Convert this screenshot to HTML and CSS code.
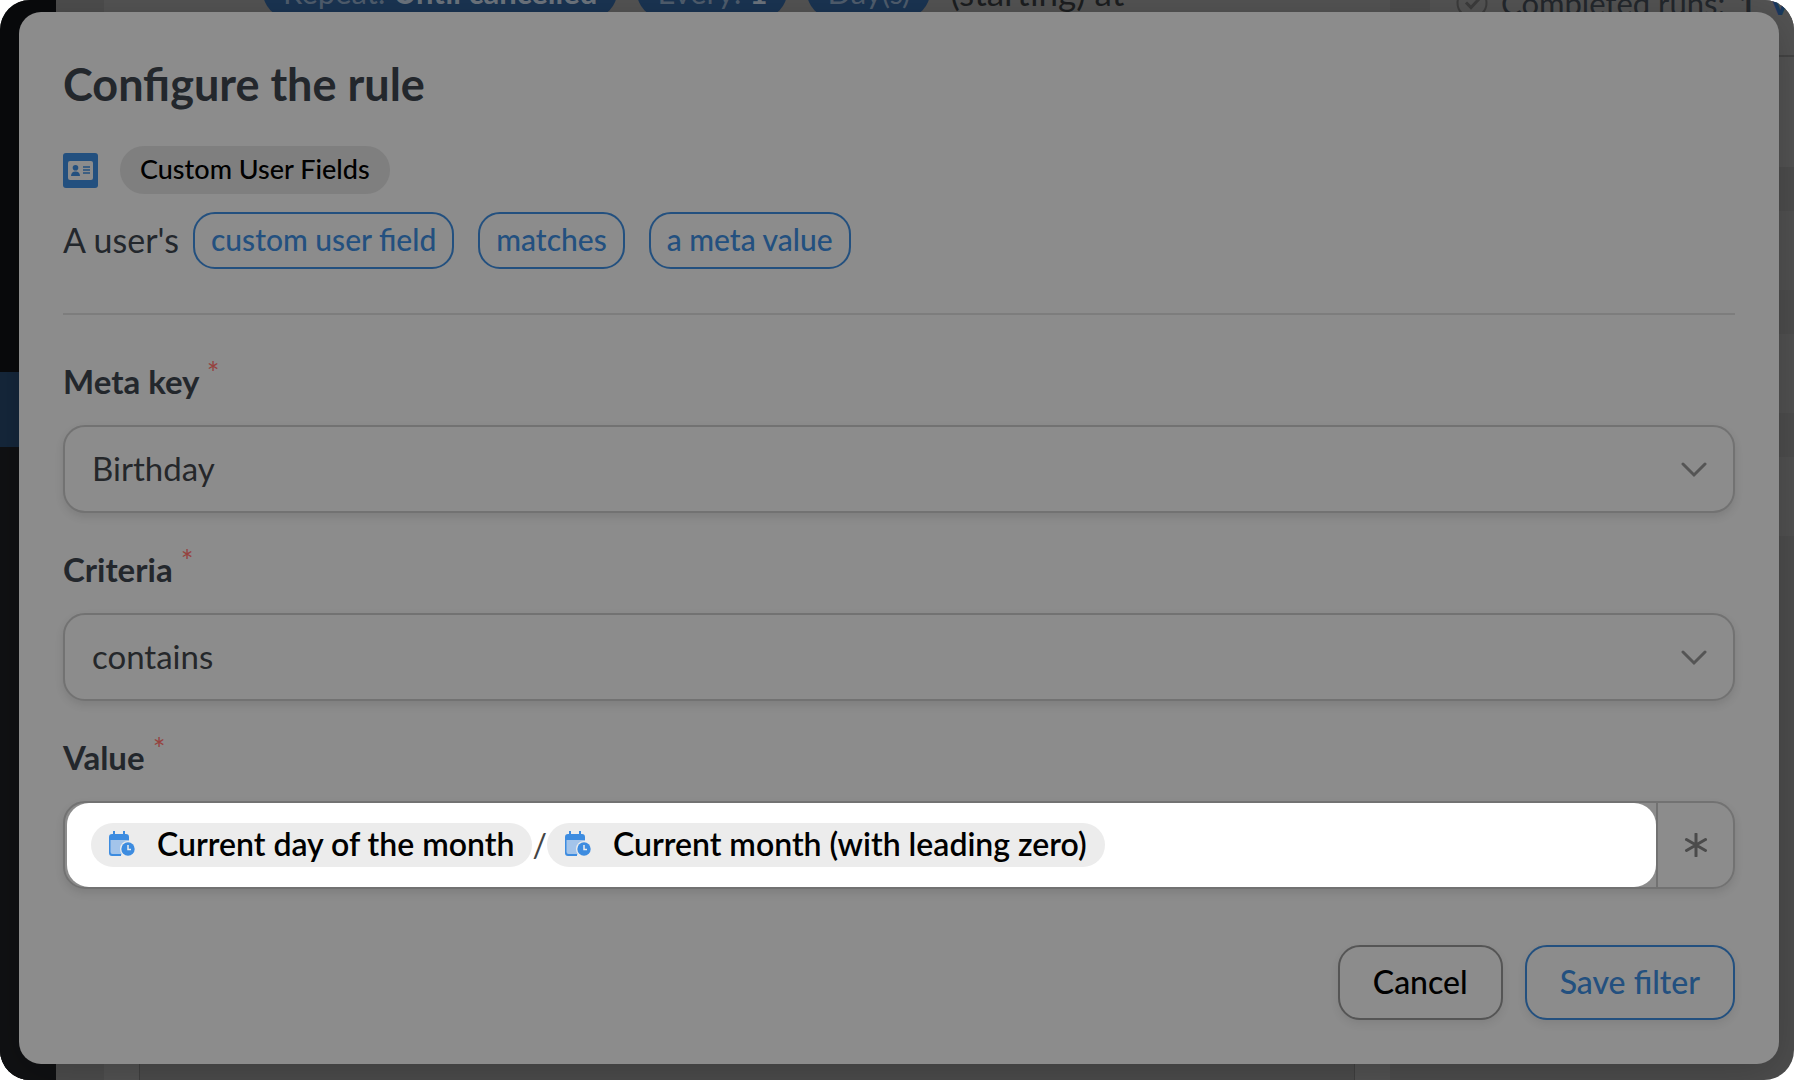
FILE: index.html
```html
<!DOCTYPE html>
<html lang="en">
  <head>
    <meta charset="UTF-8" />
    <meta name="viewport" content="width=device-width, initial-scale=1.0" />
    <title>Configure the rule</title>
    <link rel="stylesheet" href="styles.css">
  </head>
  <body>
    <div class="app">
      <!-- Page behind the dialog -->
      <div class="page" aria-hidden="true">
        <div class="sidebar">
          <div class="sidebar-current"></div>
          <div class="sidebar-submenu"></div>
        </div>
        <div class="editor">
          <div class="editor-canvas">
            <div class="schedule">
              <span class="schedule-pill">Repeat: <b>Until cancelled</b></span>
              <span class="schedule-pill">Every: <b>1</b></span>
              <span class="schedule-pill">Day(s)</span>
              <span class="schedule-text">(starting) at</span>
            </div>
            <div class="editor-block"></div>
          </div>
        </div>
        <div class="panels">
          <div class="panel-first">
            <svg class="check" viewBox="0 0 32 32" fill="none" stroke="currentColor" stroke-width="2">
              <circle cx="16" cy="16" r="14.5" />
              <path d="M10 15.5l5 5 8-8.5" stroke-width="3" />
            </svg>
            <span class="runs">Completed runs:</span>
            <b class="runs-count">1</b>
            <b class="view">View</b>
          </div>
          <div class="panel-body"></div>
          <div class="panel"></div>
          <div class="panel"></div>
          <div class="panel"></div>
        </div>
      </div>

      <div class="overlay">
        <form class="modal" role="dialog" aria-labelledby="modalTitle">
          <h1 id="modalTitle">Configure the rule</h1>

          <div class="integration">
            <svg class="integration-icon" viewBox="0 0 35 35">
              <rect width="35" height="35" rx="3" fill="#23507f" />
              <rect x="5" y="8" width="25" height="19" rx="2" fill="#8c8c8c" />
              <circle cx="12.5" cy="14.8" r="2.8" fill="#23507f" />
              <path d="M8 23c0-3 2-4.400 4.500-4.400s4.500 1.400 4.500 4.400z" fill="#23507f" />
              <path d="M20 14h7M20 17h7M20 20h7" stroke="#23507f" stroke-width="1.400" />
            </svg>
            <span class="integration-name">Custom User Fields</span>
          </div>

          <div class="sentence">
            <span>A user's</span>
            <button type="button" class="token">custom user field</button>
            <button type="button" class="token">matches</button>
            <button type="button" class="token">a meta value</button>
          </div>

          <hr />

          <div class="field">
            <label for="metaKey">Meta key <span class="required">*</span></label>
            <div class="select">
              <select id="metaKey">
                <option>Birthday</option>
              </select>
              <svg class="chevron" viewBox="0 0 26 16"><path d="M2 2l11 11L24 2" /></svg>
            </div>
          </div>

          <div class="field">
            <label for="criteria">Criteria <span class="required">*</span></label>
            <div class="select">
              <select id="criteria">
                <option>contains</option>
              </select>
              <svg class="chevron" viewBox="0 0 26 16"><path d="M2 2l11 11L24 2" /></svg>
            </div>
          </div>

          <div class="field">
            <label id="valueLabel">Value <span class="required">*</span></label>
            <div class="value">
              <div class="value-input" contenteditable="true" role="textbox" aria-labelledby="valueLabel" spellcheck="false"><span class="chip" contenteditable="false"><svg class="chip-icon" viewBox="0 0 26 26">
                    <path d="M1 9h19v8l-8 7H3a2 2 0 0 1-2-2z" fill="#a3c4ea" />
                    <path d="M0 9h1.500v12a2 2 0 0 0 2 2H12v2H3a3 3 0 0 1-3-3z" fill="#3d8ce0" />
                    <path d="M0 9V6a3 3 0 0 1 3-3h1V0h2v3h8V0h2v3h1a3 3 0 0 1 3 3v3z" fill="#3d8ce0" />
                    <circle cx="19" cy="18" r="8" fill="#ececec" />
                    <circle cx="19" cy="18" r="6.700" fill="#3d8ce0" />
                    <path d="M19 14v4.500h3" fill="none" stroke="#ececec" stroke-width="1.500" />
                  </svg>Current day of the month</span><span>/</span><span class="chip" contenteditable="false"><svg class="chip-icon" viewBox="0 0 26 26">
                    <path d="M1 9h19v8l-8 7H3a2 2 0 0 1-2-2z" fill="#a3c4ea" />
                    <path d="M0 9h1.500v12a2 2 0 0 0 2 2H12v2H3a3 3 0 0 1-3-3z" fill="#3d8ce0" />
                    <path d="M0 9V6a3 3 0 0 1 3-3h1V0h2v3h8V0h2v3h1a3 3 0 0 1 3 3v3z" fill="#3d8ce0" />
                    <circle cx="19" cy="18" r="8" fill="#ececec" />
                    <circle cx="19" cy="18" r="6.700" fill="#3d8ce0" />
                    <path d="M19 14v4.500h3" fill="none" stroke="#ececec" stroke-width="1.500" />
                  </svg>Current month (with leading zero)</span></div>
              <button type="button" class="value-tokens" aria-label="Insert token">
                <svg viewBox="0 0 24 24"><path d="M12 1v22M2.500 6.500l19 11M21.500 6.500l-19 11" /></svg>
              </button>
            </div>
          </div>

          <div class="actions">
            <button type="button" class="btn">Cancel</button>
            <button type="submit" class="btn btn-primary">Save filter</button>
          </div>
        </form>
      </div>
    </div>
  </body>
</html>
```

FILE: styles.css
```css
* {
  box-sizing: border-box;
}
body {
  margin: 0;
  background-color: #fff;
  font-family: Lato, sans-serif;
  color: #23272c;
}
button,
select {
  font-family: inherit;
}
.app {
  display: grid;
  min-height: 100vh;
  border-radius: 30px;
  overflow: hidden;
}
.page,
.overlay {
  grid-area: 1 / 1;
  min-width: 0;
}

/* Page behind the dialog */
.page {
  display: flex;
  background-color: #4d4d4d;
}
.sidebar {
  width: 56px;
  padding-top: 372px;
  background-color: #090a0c;
  display: flex;
  flex-direction: column;
}
.sidebar-current {
  height: 75px;
  background-color: #15273b;
}
.sidebar-submenu {
  flex: 1;
  background-color: #101113;
}
.editor {
  flex: 1;
  padding: 0 0 0 48px;
}
.editor-canvas {
  height: 100%;
  padding: 0 35px;
  background-color: #535353;
  display: flex;
  flex-direction: column;
}
.schedule {
  display: flex;
  align-items: center;
  gap: 20px;
  height: 52px;
  margin: -34px 0 0 124px;
  font-size: 31px;
  white-space: nowrap;
}
.schedule-pill {
  padding: 0 20px;
  border-radius: 26px;
  background-color: #1a3452;
  color: #4f5d6d;
  line-height: 52px;
}
.schedule-pill b {
  color: #6c747d;
}
.schedule-text {
  color: #1c1e20;
  font-size: 35px;
}
.editor-block {
  flex: 1;
  margin-top: 32px;
  background-color: #4c4c4c;
  border: 1px solid #404040;
  border-width: 0 1px;
}
.panels {
  width: 404px;
  padding-left: 40px;
  display: flex;
  flex-direction: column;
  gap: 44px;
}
.panel-first {
  display: flex;
  align-items: center;
  gap: 13px;
  height: 87px;
  margin: -30px 0 -44px;
  padding: 0 0 20px 26px;
  background-color: #535353;
  border-bottom: 2px solid #444;
  font-size: 31px;
  white-space: nowrap;
}
.check {
  flex-shrink: 0;
  width: 32px;
  height: 32px;
  color: #3c3c3c;
}
.view {
  color: #19395e;
}
.panel-body {
  height: 110px;
  background-color: #535353;
}
.panel {
  height: 79px;
  background-color: #515151;
}

/* Dialog */
.overlay {
  display: flex;
  padding: 12px 15px 16px 19px;
}
.modal {
  flex: 1;
  min-width: 0;
  padding: 44px;
  border-radius: 22px;
  background-color: #8c8c8c;
  box-shadow: 0 8px 40px rgba(0, 0, 0, 0.2);
}
h1 {
  margin: 0 0 34px;
  font-size: 45px;
  line-height: 56px;
  font-weight: 700;
}
.integration {
  display: flex;
  align-items: center;
  gap: 22px;
  margin-bottom: 18px;
}
.integration-icon {
  width: 35px;
  height: 35px;
}
.integration-name {
  height: 48px;
  padding: 0 20px;
  border-radius: 24px;
  background-color: #7f7f7f;
  color: #000;
  font-size: 27px;
  line-height: 46px;
  font-weight: 500;
}
.sentence {
  display: flex;
  align-items: center;
  gap: 24px;
  font-size: 34px;
}
.sentence span {
  margin-right: -10px;
  padding-bottom: 2px;
}
.token {
  height: 57px;
  padding: 0 16px 3px;
  border: 2px solid #23507f;
  border-radius: 22px;
  background: none;
  color: #23507f;
  font-size: 30px;
  font-weight: 500;
}
hr {
  height: 2px;
  margin: 44px 0;
  border: 0;
  background-color: #7d7d7d;
}
.field {
  margin-bottom: 34px;
}
.field label {
  display: block;
  height: 44px;
  margin-bottom: 22px;
  font-size: 33px;
  line-height: 44px;
  font-weight: 700;
}
.required {
  color: #96423e;
  font-size: 30px;
  font-weight: 400;
  vertical-align: 10px;
  line-height: 0;
}
.select {
  position: relative;
}
.select select {
  display: block;
  width: 100%;
  height: 88px;
  padding: 0 27px 3px;
  border: 2px solid #727272;
  border-radius: 22px;
  background-color: #8c8c8c;
  box-shadow: 0 4px 8px rgba(0, 0, 0, 0.1);
  color: #25272a;
  font-size: 33px;
  appearance: none;
}
.chevron {
  position: absolute;
  right: 28px;
  top: 37px;
  width: 26px;
  height: 16px;
  fill: none;
  stroke: #555;
  stroke-width: 3;
  stroke-linecap: round;
  pointer-events: none;
}
.value {
  display: flex;
  height: 88px;
  border: 2px solid #727272;
  border-radius: 22px;
  box-shadow: 0 4px 8px rgba(0, 0, 0, 0.1);
}
.value-input {
  flex: 1;
  display: flex;
  align-items: center;
  margin: 0 0 0 2px;
  padding: 0 24px;
  border-radius: 22px;
  background-color: #fff;
  color: #444;
  font-size: 32px;
  line-height: 42px;
  white-space: nowrap;
}
.chip {
  display: inline-flex;
  align-items: center;
  gap: 22px;
  height: 44px;
  padding: 0 18px 2px;
  border-radius: 22px;
  background-color: #ececec;
  color: #000;
  font-size: 32px;
  font-weight: 600;
}
.chip-icon {
  width: 26px;
  height: 26px;
}
.value-tokens {
  width: 77px;
  padding: 0;
  border: 0;
  border-left: 2px solid #727272;
  background: none;
}
.value-tokens svg {
  display: block;
  width: 24px;
  height: 24px;
  margin: 0 auto;
  stroke: #4b4b4b;
  stroke-width: 3;
  stroke-linecap: round;
}
.actions {
  display: flex;
  justify-content: flex-end;
  gap: 22px;
  margin-top: 56px;
}
.btn {
  height: 75px;
  padding: 0 33px 3px;
  border: 2px solid #555;
  border-radius: 22px;
  background-color: #8c8c8c;
  box-shadow: 0 4px 8px rgba(0, 0, 0, 0.08);
  color: #000;
  font-size: 32px;
  font-weight: 500;
}
.btn-primary {
  border-color: #23507f;
  color: #23507f;
}
```
